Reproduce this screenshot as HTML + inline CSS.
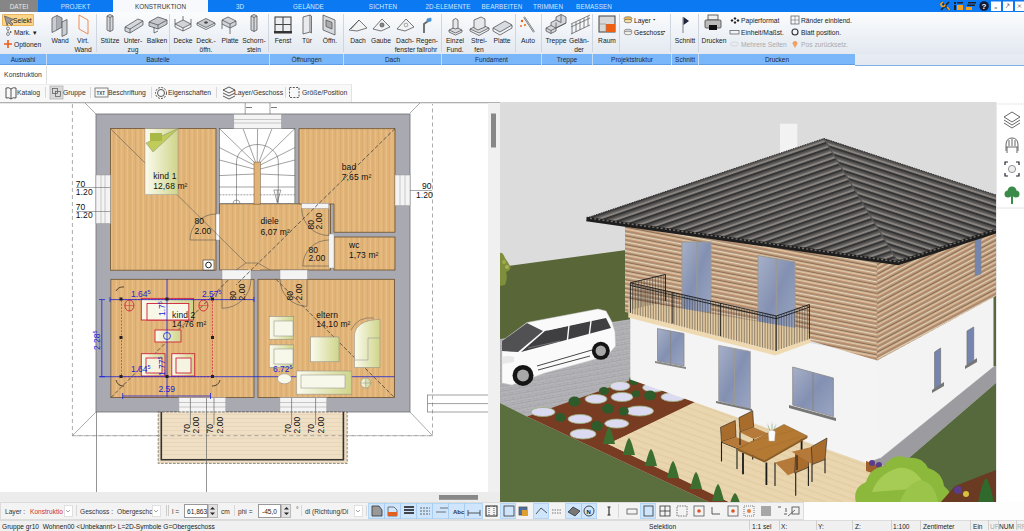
<!DOCTYPE html>
<html><head><meta charset="utf-8">
<style>
*{margin:0;padding:0;box-sizing:border-box}
html,body{width:1024px;height:531px;overflow:hidden;background:#fff;font-family:"Liberation Sans",sans-serif;color:#222}
.a{position:absolute}
#tabs{left:0;top:0;width:1024px;height:12px;background:#0a79f2}
.tab{position:absolute;top:0;height:12px;font-size:6.3px;line-height:13.5px;text-align:center;color:#d6e8ff;letter-spacing:0.1px}
#ribbon{left:0;top:12px;width:1024px;height:42px;background:linear-gradient(#fbfcfd,#e3e9f1)}
#strip{left:0;top:54px;width:855px;height:11px;background:#7ab7fa;border-bottom:1px solid #5f9fe6}
#strip2{left:855px;top:54px;width:169px;height:12px;background:linear-gradient(#e8edf4,#e3e9f1);border-bottom:1px solid #7eb0e8}
.gl{position:absolute;top:0;height:11px;line-height:11px;font-size:6.5px;color:#1c2a44;text-align:center}
.gs{position:absolute;top:0;width:1px;height:11px;background:#c6dcf3}
.lbl{position:absolute;font-size:6.7px;line-height:8.5px;color:#222;text-align:center;white-space:nowrap}
.rs{position:absolute;top:14px;width:1px;height:38px;background:#cfd6df}
.sm{position:absolute;font-size:6.7px;line-height:9.6px;color:#1a1a1a;white-space:nowrap}
#tb{left:0;top:84px;width:352px;height:18px;background:#f8f8f8;border-right:1px solid #e2e2e2;border-top:1px solid #eee}
.ti{position:absolute;top:0;height:16px;line-height:16px;font-size:6.8px;color:#333;white-space:nowrap}
.tsep{position:absolute;top:3px;width:1px;height:11px;background:#d8d8d8}
#bot{left:0;top:502px;width:1024px;height:18px;background:#f2f2f2}
#status{left:0;top:520px;width:1024px;height:11px;background:#f0f0f0;border-top:1px solid #dcdcdc}
.st{position:absolute;top:0;height:11px;line-height:13px;font-size:6.6px;color:#222;white-space:nowrap}
.ss{position:absolute;top:1px;width:1px;height:10px;background:#d0d0d0}
.bi{position:absolute;top:0;height:18px;line-height:20px;font-size:6.6px;color:#333;white-space:nowrap}
.bb{position:absolute;top:2px;width:15px;height:14px;background:#cfe5fb;border:1px solid #a9cff5}
</style></head><body>
<!-- TAB BAR -->
<div id="tabs" class="a">
 <div class="tab" style="left:0;width:38px;background:#868686;color:#e8e8e8">DATEI</div>
 <div class="tab" style="left:38px;width:75px;background:#0a79f2">PROJEKT</div>
 <div class="tab" style="left:113px;width:95px;background:#f7f9fc;color:#333">KONSTRUKTION</div>
 <div class="tab" style="left:222px;width:36px">3D</div>
 <div class="tab" style="left:280px;width:57px">GELÄNDE</div>
 <div class="tab" style="left:358px;width:50px">SICHTEN</div>
 <div class="tab" style="left:420px;width:56px">2D-ELEMENTE</div>
 <div class="tab" style="left:478px;width:48px">BEARBEITEN</div>
 <div class="tab" style="left:530px;width:36px">TRIMMEN</div>
 <div class="tab" style="left:573px;width:42px">BEMASSEN</div>
</div>
<div id="ribbon" class="a"></div>
<!-- RIBBON CONTENT -->
<div class="a" style="left:2px;top:14px;width:32px;height:12px;background:#fbd58a;border:1px solid #eab45a;border-radius:1px"></div>
<svg class="a" style="left:0;top:12px" width="1024" height="42" viewBox="0 12 1024 42">
 <g fill="none" stroke="#555" stroke-width="0.8">
  <!-- selekt arrow -->
  <path d="M4.5 16 L13.5 19.5 L10 21 L13 24 L11.5 25.5 L8.5 22.5 L7 25.5 Z" fill="#9a9a9a" stroke="#555" stroke-width="0.7" stroke-linejoin="miter"/>
  <!-- mark icon -->
  <circle cx="8" cy="28.5" r="1.5" stroke="#444" stroke-width="0.6"/><circle cx="8" cy="34" r="1.5" stroke="#444" stroke-width="0.6"/><path d="M8 30 L8 32.5" stroke="#444" stroke-width="0.6"/>
  <path d="M10 31 l2 1 l-2 1z" fill="#333" stroke="none"/>
  <!-- + optionen -->
  <path d="M4 44 H12 M8 40 V48" stroke="#f05a14" stroke-width="1.6"/>
  <!-- wand -->
  <path d="M52 18 L57 15.5 L57 30 L52 32.5 Z" fill="#c9ccd2" stroke="#555"/>
  <path d="M57 15.5 L62 18 L62 27 L57 30" fill="#a9adb5" stroke="#555"/>
  <path d="M62 22 L67 19.5 L67 34 L62 36.5 Z" fill="#c9ccd2" stroke="#555"/>
  <!-- virt wand -->
  <path d="M79 15 L88 20 L88 34 L79 29 Z" stroke="#f08040" stroke-width="0.9"/>
  <!-- stutze -->
  <path d="M107 16 L110 14.5 L113 16 L113 30 L110 31.5 L107 30 Z" fill="#d5d8dd"/><path d="M107 16 L110 17.5 L113 16 M110 17.5 V31.5"/>
  <!-- unterzug -->
  <path d="M125 27 L138 19 L143 21 L143 25 L130 33 L125 31 Z" fill="#d5d8dd"/><path d="M125 27 L130 29 L143 21 M130 29 V33"/>
  <!-- balken -->
  <path d="M149 22 L158 17 L167 20 L167 24 L158 29 L149 26 Z" fill="#c5c9cf"/><path d="M149 22 L158 25 L167 20 M158 25 V29 M154 27 V33 L158 31"/>
  <!-- decke -->
  <path d="M175 24 L183 20 L191 24 L183 28 Z" fill="#d0d3d8"/><path d="M175 24 V27 L183 31 L191 27 V24 M183 28 V31 M183 16 V20 M175 19 V24 M191 19 V24"/>
  <!-- deck offn -->
  <path d="M197 23 L206 18.5 L215 23 L206 27.5 Z" fill="#c8ccd2"/><path d="M197 23 V25 L206 29.5 L215 25 V23"/><path d="M204 22.5 L206 21.5 L208 22.5 L206 23.5 Z" fill="#444"/>
  <!-- platte -->
  <path d="M222 20 L228 17 L236 21 L236 25 L230 28 L222 24 Z" fill="#d0d3d8"/><path d="M222 20 L230 24 L236 21 M230 24 V34 M222 24 V29"/>
  <!-- schornstein -->
  <path d="M251 16 L254 14.5 L257 16 L257 30 L254 31.5 L251 30 Z" fill="#d5d8dd"/><path d="M251 16 L254 17.5 L257 16 M254 17.5 V31.5"/>
  <!-- fenst -->
  <rect x="275" y="17" width="16" height="15" fill="#eceef2" stroke="#444" stroke-width="1.1"/><path d="M283 17 V32 M275 24.5 H291" stroke="#444" stroke-width="1.1"/><rect x="274" y="31" width="18" height="2.5" fill="#333" stroke="none"/>
  <!-- tur -->
  <path d="M303 17 L310 15 L310 32 L303 34 Z" fill="#e8eaee" stroke="#555"/><path d="M310 15 L311.5 16 L311.5 33 L310 32"/>
  <!-- offn -->
  <path d="M323 15 L335 20 L335 35 L323 30 Z" fill="#d5d8dd" stroke="#555"/><path d="M326 20 L332 22.5 L332 29 L326 26.5 Z" fill="#aaa"/>
  <!-- dach -->
  <path d="M349 30 L359 20 L367 28 L357 31 Z M359 20 L351 29" fill="#f2f3f5" stroke="#555"/>
  <!-- gaube -->
  <path d="M373 29 L382 19 L390 27 L381 31 Z" fill="#f2f3f5"/><circle cx="382" cy="25" r="2" fill="#888"/>
  <!-- dachfenster -->
  <path d="M397 29 L406 19 L414 27 L405 31 Z" fill="#f2f3f5"/><path d="M404 24 L407 23 L408 26 L405 27 Z" stroke="#999"/>
  <!-- regenfallrohr -->
  <path d="M424 33 V24 L428 21" stroke="#666" stroke-width="1.8"/><path d="M427 19 L431 18 L431 21 L427 22 Z" fill="#4a90d0" stroke="#4a90d0"/>
  <!-- einzel fund -->
  <path d="M449 30 L455.5 27 L462 30 L455.5 33 Z" fill="#d8dbe0"/><path d="M449 30 V32 L455.5 35 L462 32 V30"/><path d="M453 20 L455.5 18.5 L458 20 V28 L455.5 29 L453 28 Z" fill="#e5e7ea"/>
  <!-- streifen -->
  <path d="M470 29 L480 24 L489 28 L479 33 Z" fill="#d8dbe0"/><path d="M470 29 V31 L479 35.5 L489 30 V28"/><path d="M474 20 L481 17 L485 19 V27 L478 30 L474 28 Z" fill="#e5e7ea"/>
  <!-- platte fund -->
  <path d="M493 28 L505 21 L512 25 L500 32 Z" fill="#d8dbe0"/><path d="M493 28 V31 L500 35 L512 28 V25"/>
  <!-- auto -->
  <path d="M524 17 L534 32" stroke="#555" stroke-width="1.8"/><path d="M524 17 L534 32" stroke="#fff" stroke-width="0.7"/>
  <circle cx="522" cy="21" r="1.2" fill="#f05a14" stroke="none"/><circle cx="525" cy="25" r="1.2" fill="#f08a34" stroke="none"/><circle cx="521" cy="26" r="0.9" fill="#f05a14" stroke="none"/>
  <!-- treppe -->
  <path d="M546 28 L551 25.5 L551 22.5 L556 20 L556 17 L561 14.5 L566 17 L566 23 L556 28 L556 31 L551 33.5 L546 31 Z" fill="#d5d8dd" stroke-linejoin="miter"/><path d="M546 28 L551 30.5 L566 23 M551 25.5 L556 28 M556 20 L561 22.5 M551 30.5 V33.5 M556 22.5 V28 M561 14.5 V22.5" stroke-linejoin="miter"/>
  <!-- gelander -->
  <path d="M571 34 L590 25 M571 27 L590 18 M571 24 L590 15 M572 24 V34 M576 22 V32 M580 20 V30 M584 18 V28 M588 16 V26" stroke="#666"/>
  <!-- raum -->
  <rect x="599" y="16" width="16" height="16" fill="#d8d8d8" stroke="#444" stroke-width="1"/><rect x="606" y="24" width="9" height="8" fill="#ee6010" stroke="none"/><path d="M599 24 H606 V32" stroke="#888" stroke-width="0.6"/>
  <!-- layer -->
  <ellipse cx="628" cy="18.5" rx="4" ry="1.8" fill="#f2c050" stroke="#555" stroke-width="0.6"/><ellipse cx="628" cy="21" rx="4" ry="1.8" fill="#f8e0a0" stroke="#555" stroke-width="0.6"/>
  <ellipse cx="628" cy="31" rx="4" ry="1.8" fill="#ddd" stroke="#666" stroke-width="0.6"/><ellipse cx="628" cy="33" rx="4" ry="1.8" fill="#eee" stroke="#666" stroke-width="0.6"/>
  <path d="M653 19 l2.5 0 l-1.25 1.5z M663 31 l2.5 0 l-1.25 1.5z" fill="#333" stroke="none"/>
  <!-- schnitt -->
  <path d="M683 17 V33" stroke="#777" stroke-width="0.9"/><path d="M683.5 17 L689 21 L683.5 25 Z" fill="#1e2440" stroke="none"/>
  <!-- drucken -->
  <rect x="708" y="15" width="10" height="5" fill="#eee" stroke="#444"/><rect x="705" y="20" width="16" height="8" rx="1" fill="#bbb" stroke="#444"/><rect x="709" y="25" width="8" height="5" fill="#111" stroke="none"/>
  <!-- papierformat -->
  <path d="M735 17 l1.5 1.5 l-1.5 1.5 l-1.5 -1.5z M735 21 l1.5 1.5 l-1.5 1.5 l-1.5 -1.5z M732 19 l1.5 1.5 l-1.5 1.5 l-1.5 -1.5z M738 19 l1.5 1.5 l-1.5 1.5 l-1.5 -1.5z" fill="#222" stroke="none"/>
  <rect x="730" y="30.5" width="9" height="3.5" stroke="#555" stroke-width="0.7"/>
  <ellipse cx="734.5" cy="44" rx="4" ry="2" stroke="#ccc" stroke-width="0.7"/>
  <rect x="791" y="16" width="8" height="8" stroke="#555" stroke-width="0.7"/><path d="M795 16 V24 M791 20 H799" stroke="#555" stroke-width="0.5"/>
  <circle cx="795" cy="32" r="3" stroke="#333" stroke-width="1.1"/>
  <path d="M795 48 L792.5 43.5 A2.5 2.5 0 1 1 797.5 43.5 Z" fill="#f0a060" stroke="none"/>
  <path d="M690 14 V52" stroke="none"/>
 </g>
</svg>
<div class="sm" style="left:13px;top:16px;font-weight:normal">Selekt</div>
<div class="sm" style="left:14px;top:28px">Mark. ▾</div>
<div class="sm" style="left:14px;top:40px">Optionen</div>
<div class="rs" style="left:96px"></div><div class="rs" style="left:169px"></div><div class="rs" style="left:268px"></div>
<div class="rs" style="left:343px"></div><div class="rs" style="left:441px"></div><div class="rs" style="left:515px"></div>
<div class="rs" style="left:541px"></div><div class="rs" style="left:592px"></div><div class="rs" style="left:619px"></div>
<div class="rs" style="left:670px"></div><div class="rs" style="left:698px"></div>
<div class="lbl" style="left:40px;width:40px;top:37px">Wand</div>
<div class="lbl" style="left:63px;width:40px;top:37px">Virt.<br>Wand</div>
<div class="lbl" style="left:90px;width:40px;top:37px">Stütze</div>
<div class="lbl" style="left:113px;width:40px;top:37px">Unter-<br>zug</div>
<div class="lbl" style="left:137px;width:40px;top:37px">Balken</div>
<div class="lbl" style="left:163px;width:40px;top:37px">Decke</div>
<div class="lbl" style="left:186px;width:40px;top:37px">Deck.-<br>öffn.</div>
<div class="lbl" style="left:210px;width:40px;top:37px">Platte</div>
<div class="lbl" style="left:234px;width:40px;top:37px">Schorn-<br>stein</div>
<div class="lbl" style="left:263px;width:40px;top:37px">Fenst</div>
<div class="lbl" style="left:287px;width:40px;top:37px">Tür</div>
<div class="lbl" style="left:310px;width:40px;top:37px">Öffn.</div>
<div class="lbl" style="left:338px;width:40px;top:37px">Dach</div>
<div class="lbl" style="left:361px;width:40px;top:37px">Gaube</div>
<div class="lbl" style="left:385px;width:40px;top:37px">Dach-<br>fenster</div>
<div class="lbl" style="left:407px;width:40px;top:37px">Regen-<br>fallrohr</div>
<div class="lbl" style="left:435px;width:40px;top:37px">Einzel<br>Fund.</div>
<div class="lbl" style="left:459px;width:40px;top:37px">Strei-<br>fen</div>
<div class="lbl" style="left:482px;width:40px;top:37px">Platte</div>
<div class="lbl" style="left:508px;width:40px;top:37px">Auto</div>
<div class="lbl" style="left:536px;width:40px;top:37px">Treppe</div>
<div class="lbl" style="left:559px;width:40px;top:37px">Gelän-<br>der</div>
<div class="lbl" style="left:587px;width:40px;top:37px">Raum</div>
<div class="sm" style="left:634px;top:16px">Layer</div>
<div class="sm" style="left:634px;top:28px">Geschoss</div>
<div class="lbl" style="left:665px;width:40px;top:37px">Schnitt</div>
<div class="lbl" style="left:694px;width:40px;top:37px">Drucken</div>
<div class="sm" style="left:741px;top:16px">Papierformat</div>
<div class="sm" style="left:741px;top:28px">Einheit/Maßst.</div>
<div class="sm" style="left:741px;top:40px;color:#aaa">Mehrere Seiten</div>
<div class="sm" style="left:801px;top:16px">Ränder einblend.</div>
<div class="sm" style="left:801px;top:28px">Blatt position.</div>
<div class="sm" style="left:801px;top:40px;color:#aaa">Pos zurücksetz.</div>
<!-- tab bar icons -->
<svg class="a" style="left:930px;top:0" width="94" height="12">
 <path d="M11 2 L19 10 M19 2 L11 10" stroke="#222" stroke-width="1.6"/><path d="M13 2.5 a2 2 0 1 0 2 2 M17 7 L19.5 10" stroke="#f5a020" stroke-width="1.6" fill="none"/>
 <rect x="24" y="2" width="2" height="2" fill="#222"/><rect x="24" y="5" width="2" height="5" fill="#222"/><rect x="27" y="5" width="6" height="5" fill="#f5a020"/><rect x="27" y="2" width="6" height="1.5" fill="#222"/>
 <rect x="38" y="2" width="8" height="1.5" fill="#222"/><rect x="37" y="4.5" width="8" height="1.5" fill="#222"/><rect x="36" y="7" width="6" height="3" fill="#f5a020"/>
 <circle cx="54" cy="6" r="4.8" fill="#111a33"/><text x="54" y="8.8" font-size="8" font-weight="bold" text-anchor="middle" fill="#fff" font-family="Liberation Sans">?</text>
 <rect x="61" y="1.5" width="10" height="9.5" fill="#fff"/><rect x="73" y="1.5" width="10" height="9.5" fill="#fff"/><rect x="85" y="1.5" width="9" height="9.5" fill="#fff"/>
 <path d="M64.5 8 H67" stroke="#333" stroke-width="0.8"/><path d="M76 8 L79 4 M77 4 H79 V6" stroke="#555" stroke-width="0.6" fill="none"/><path d="M88 4.5 L91 7.5 M91 4.5 L88 7.5" stroke="#555" stroke-width="0.7"/>
</svg>

<div id="strip" class="a">
 <div class="gl" style="left:0;width:46px">Auswahl</div><div class="gs" style="left:46px"></div>
 <div class="gl" style="left:47px;width:222px">Bauteile</div><div class="gs" style="left:269px"></div>
 <div class="gl" style="left:270px;width:73px">Öffnungen</div><div class="gs" style="left:343px"></div>
 <div class="gl" style="left:344px;width:97px">Dach</div><div class="gs" style="left:441px"></div>
 <div class="gl" style="left:442px;width:99px">Fundament</div><div class="gs" style="left:541px"></div>
 <div class="gl" style="left:542px;width:50px">Treppe</div><div class="gs" style="left:592px"></div>
 <div class="gl" style="left:593px;width:78px">Projektstruktur</div><div class="gs" style="left:671px"></div>
 <div class="gl" style="left:672px;width:26px">Schnitt</div><div class="gs" style="left:698px"></div>
 <div class="gl" style="left:699px;width:156px">Drucken</div>
</div>
<div id="strip2" class="a"></div>
<!-- KONSTRUKTION TAB ROW -->
<div class="a" style="left:0;top:66px;width:47px;height:18px;border-right:1px solid #e0e0e0;background:#fff;font-size:6.8px;line-height:18px;text-align:center;color:#333">Konstruktion</div>
<div id="tb" class="a"></div>
<!-- TOOLBAR -->
<svg class="a" style="left:0;top:84px" width="360" height="18">
 <g fill="none" stroke="#444" stroke-width="0.9">
  <path d="M6 4 Q9 3 11 5 Q13 3 16 4 V14 Q13 13 11 15 Q9 13 6 14 Z M11 5 V15"/>
  <rect x="50" y="2" width="13" height="13" fill="#d8d8d8" stroke="#bbb"/><rect x="52.5" y="4.5" width="5" height="5" stroke="#555" stroke-width="0.7"/><rect x="55.5" y="7.5" width="5" height="5" stroke="#555" stroke-width="0.7"/>
  <rect x="95" y="4" width="13" height="9" stroke="#555" stroke-width="0.7"/>
  <circle cx="161" cy="9" r="3.5"/><circle cx="161" cy="9" r="5.5" stroke-dasharray="2 1.2"/>
  <path d="M223 6 L229 3 L235 6 L229 9 Z M223 9 L229 12 L235 9 M223 12 L229 15 L235 12"/>
  <rect x="289.5" y="3.5" width="9.5" height="10" stroke-dasharray="2 1.3"/>
 </g>
 <text x="96.5" y="11" font-size="4.5" font-weight="bold" fill="#444" font-family="Liberation Sans">TXT</text>
</svg>
<div class="ti" style="left:17px;top:85px">Katalog</div><div class="tsep" style="left:45px;top:87px"></div>
<div class="ti" style="left:63px;top:85px">Gruppe</div><div class="tsep" style="left:90px;top:87px"></div>
<div class="ti" style="left:108px;top:85px">Beschriftung</div><div class="tsep" style="left:151px;top:87px"></div>
<div class="ti" style="left:168px;top:85px">Eigenschaften</div><div class="tsep" style="left:216px;top:87px"></div>
<div class="ti" style="left:234px;top:85px">Layer/Geschoss</div><div class="tsep" style="left:285px;top:87px"></div>
<div class="ti" style="left:302px;top:85px">Größe/Position</div>


<!-- PLAN -->
<svg class="a" style="left:0;top:102px" width="500" height="400" viewBox="0 102 500 400" font-family="Liberation Sans">
 <defs>
  <pattern id="wood" patternUnits="userSpaceOnUse" width="5.4" height="10">
   <rect width="5.4" height="10" fill="#e3b67a"/><rect x="0" width="1" height="10" fill="#d9aa6e"/><rect x="2.7" width="1.1" height="10" fill="#e9c088"/><rect x="4" width="0.7" height="10" fill="#dcae72"/>
  </pattern>
  <pattern id="beige" patternUnits="userSpaceOnUse" width="10" height="4">
   <rect width="10" height="4" fill="#efdfc4"/><rect y="2" width="10" height="1" fill="#e9d6b8"/>
  </pattern>
  <linearGradient id="fur" x1="0" x2="1" y1="0" y2="0"><stop offset="0" stop-color="#fbfbee"/><stop offset="1" stop-color="#cfd58a"/></linearGradient>
 </defs>
 <rect x="0" y="102" width="500" height="400" fill="#fff"/>
 <rect x="0" y="102" width="500" height="1.3" fill="#b0b0b0"/>
 <!-- dashed outline -->
 <g stroke="#888" stroke-width="0.7" fill="none">
  <path d="M72.4 104 V435.7 H432.5 V104" stroke-dasharray="4 3"/>
  <path d="M72.4 435.7 L96 412 M432.5 435.7 L410 412 M85 103 L96 114 M420 103 L410 113"/>
  <rect x="427.5" y="395" width="62" height="17" stroke="#777"/><path d="M427.5 403.6 H490" stroke="#777"/>
 </g>
 <!-- walls -->
 <rect x="96" y="114" width="314" height="298" fill="#a9a9b1" stroke="#6e6e76" stroke-width="0.8"/>
 <!-- rooms -->
 <g stroke="#6a5030" stroke-width="0.8">
  <rect x="110.4" y="128.6" width="105.6" height="141.6" fill="url(#wood)"/>
  <rect x="219.6" y="203.8" width="110.9" height="66.2" fill="url(#wood)"/>
  <path d="M299 128.6 H395 V232.3 H334 V204 H299 Z" fill="url(#wood)"/>
  <rect x="334" y="237" width="61" height="33" fill="url(#wood)"/>
  <rect x="110.9" y="279.3" width="143.1" height="118.3" fill="url(#wood)"/>
  <rect x="258" y="279.3" width="136.5" height="118.3" fill="url(#wood)"/>
 </g>
 <!-- stairs -->
 <rect x="219.4" y="128.6" width="75.5" height="75" fill="#fff" stroke="#555" stroke-width="0.6"/>
 <g stroke="#444" stroke-width="0.5" fill="none">
  <path d="M236.5 203.5 V162 A20.9 17.5 0 0 1 278.3 162 V203.5"/>
  <path d="M255 163 L219.4 128.6 M255.5 162 L243 128.6 M257.2 162 L257.6 128.6 M259 162 L272 128.6 M259.5 163 L294.9 128.6"/>
  <path d="M254 165 L219.4 147.6 M254 169 L219.4 160 M254 174 L219.4 175.6 M260.3 165 L294.9 147.6 M260.3 169 L294.9 160 M260.3 174 L294.9 175.6"/>
  <path d="M219.4 187 H254 M260.3 187 H294.9"/>
  <path d="M219.4 194.8 H254 M260.3 194.8 H294.9" stroke-dasharray="2 1"/>
  <path d="M273.8 190 H280.8 L277.3 202.5 Z M277.3 190 V202.5"/>
  <path d="M233 203.5 A3.5 3.5 0 0 1 240 203.5"/>
  <path d="M245.2 103 V128.6 M270 103 V128.6"/><path d="M246 107.5 H252 M271 107.5 H277" stroke="#222" stroke-width="0.6"/>
 </g>
 <rect x="254" y="162.1" width="6.3" height="42" fill="#e2b377" stroke="#6a5030" stroke-width="0.5"/>
 <!-- windows -->
 <g fill="#f4f4f4" stroke="#999" stroke-width="0.5">
  <rect x="233.8" y="114.3" width="47.6" height="14.3"/><path d="M233.8 119.5 H281.4 M233.8 123 H281.4" fill="none"/>
  <rect x="96" y="175" width="14.4" height="48.5"/><path d="M101 175 V223.5 M105 175 V223.5" fill="none"/>
  <rect x="395" y="175" width="15" height="30.6"/><path d="M400 175 V205.6 M405 175 V205.6" fill="none"/>
  <rect x="178.9" y="397.6" width="46.9" height="14.4"/><path d="M178.9 402.5 H225.8 M178.9 407 H225.8" fill="none"/>
  <rect x="279.9" y="397.6" width="46.9" height="14.4"/><path d="M279.9 402.5 H326.8 M279.9 407 H326.8" fill="none"/>
  <rect x="222" y="270" width="29" height="9.3"/><rect x="280" y="270" width="27.5" height="9.3"/>
  <rect x="216" y="214" width="3.6" height="26" fill="#fff"/>
  <rect x="301.7" y="203.4" width="27" height="5"/>
  <rect x="328.8" y="234" width="5.2" height="34"/>
  <rect x="248" y="266" width="12" height="4" stroke="none" fill="#e2b377"/>
 </g>
 <!-- window dim lines -->
 <g stroke="#555" stroke-width="0.5" fill="none">
  <path d="M76 187.5 H110 M76 211.5 H110 M410 190.5 H432"/>
  
 </g>
 <!-- door arcs -->
 <g stroke="#444" stroke-width="0.5" fill="none">
  <path d="M216 214 A26 26 0 0 0 190 240 H216"/>
  <path d="M301.7 208.5 A27 27 0 0 0 328.8 235.5 V208.5"/>
  <path d="M328.8 240 A26 26 0 0 0 302.8 266 H328.8"/>
  <path d="M251 279.3 A29 29 0 0 1 222 308.3 V279.3"/>
  <path d="M280 279.3 A27 27 0 0 0 307 306.3 V279.3"/>
 </g>
 <!-- room diagonals -->
 <g stroke="#555" stroke-width="0.55" fill="none">
  <path d="M110.4 128.6 L246 263 L236 270 M258 263 L270 270 M246 263 H258"/>
  <path d="M395 128.6 L236 285 M110.9 397.6 L229 279.3" stroke-dasharray="4 2" stroke="#3a3a3a" stroke-width="0.75"/>
  <path d="M276 279.3 L394.5 397.6" stroke-dasharray="4 2" stroke="#3a3a3a" stroke-width="0.75"/>
  
 </g>
 <!-- bed kind1 -->
 <rect x="145" y="128.6" width="33" height="66" fill="url(#fur)" stroke="#999" stroke-width="0.5"/>
 <path d="M178 128.6 L146 143 L153 152 Z" fill="#bfcc5a" stroke="#777" stroke-width="0.4"/>
 <rect x="150" y="133" width="12" height="8" fill="#aab845"/>
 <!-- stove icon -->
 <rect x="203" y="260" width="11" height="10" fill="#fff" stroke="#333" stroke-width="0.6"/><circle cx="208.5" cy="265" r="2.8" fill="none" stroke="#222" stroke-width="1"/>
 <!-- kind2 furniture -->
 <g stroke="#d0203a" stroke-width="0.9">
  <rect x="141.3" y="298.4" width="52.2" height="21.6" fill="url(#fur)"/>
  <rect x="147" y="303.5" width="41.8" height="16.5" fill="#f8f8e8"/>
  <rect x="155" y="330" width="26" height="12" fill="url(#fur)"/>
  <rect x="141.3" y="353.7" width="23.7" height="22.3" fill="url(#fur)"/><rect x="146" y="358" width="16" height="15" fill="#f4f4e0"/>
  <rect x="171.8" y="353.7" width="22.9" height="22.3" fill="url(#fur)"/><rect x="176" y="358" width="15" height="15" fill="#f4f4e0"/>
  <ellipse cx="129.4" cy="305.5" rx="4.5" ry="5.5" fill="none"/><path d="M125 305.5 H134 M129.4 300 V311" stroke-width="0.5"/>
  <ellipse cx="203.4" cy="305.5" rx="4.5" ry="5.5" fill="none"/><path d="M199 305.5 H208" stroke-width="0.5"/>
  <rect x="121.5" y="299.6" width="91" height="77.1" fill="none" stroke-dasharray="2 1.3" stroke-width="0.7"/>
 </g>
 <g stroke="#1c22d8" stroke-width="0.8" fill="none">
  <path d="M116 291 A8 8 0 0 1 124 287 M116 380 A8 8 0 0 0 124 386 M212 386 A8 8 0 0 0 220 380" stroke="#111" stroke-width="0.7"/>
  <path d="M110 299.6 H254 M100 376.7 H394.5 M122.7 396 H210.5 M101.8 299.6 V376.7 M167 279 V397"/>
  <path d="M110 297 V302 M254 297 V302 M99 299.6 H105 M99 376.7 H105 M122.7 393 V399 M210.5 393 V399"/>
  <circle cx="167" cy="336" r="3.5"/>
 </g>
 <g fill="#222">
  <rect x="119.5" y="297.5" width="3" height="3"/><rect x="165.5" y="297.5" width="3" height="3"/><rect x="211" y="297.5" width="3" height="3"/>
  <rect x="119.5" y="375" width="3" height="3"/><rect x="165.5" y="375" width="3" height="3"/><rect x="211" y="375" width="3" height="3"/>
  <rect x="119.5" y="336" width="3" height="3"/><rect x="211" y="336" width="3" height="3"/>
 </g>
 <!-- eltern furniture -->
 <g stroke="#888" stroke-width="0.5" fill="url(#fur)">
  <rect x="269.2" y="316.6" width="24.6" height="22.6"/><rect x="274" y="321" width="19" height="15" fill="#f8f8ea"/>
  <rect x="269.2" y="344.9" width="24.6" height="22.6"/><rect x="274" y="349" width="19" height="15" fill="#f8f8ea"/>
  <rect x="310.7" y="337" width="28.3" height="24.8"/>
  <path d="M354.5 367.5 V335 Q356 320 380 319.4 V367.5 Z"/><path d="M354.5 360 H368 V338 H380" fill="none"/>
  <path d="M296.6 371 H351.7 V394.3 H296.6 Z"/><rect x="301" y="375" width="44" height="13" fill="#f8f8ea"/>
  <ellipse cx="284.5" cy="378.8" rx="7" ry="5" fill="#f8f8ea"/>
  <circle cx="365.8" cy="383" r="5"/><path d="M360.8 383 H370.8 M365.8 378 V388" fill="none"/>
 </g>
 <path d="M351 330 Q358 316 374 318" stroke="#555" stroke-width="0.5" fill="none"/>
 <!-- balcony -->
 <rect x="158.2" y="412" width="189" height="51.4" fill="url(#beige)" stroke="#555" stroke-width="0.7" stroke-dasharray="2.5 1.5"/>
 <path d="M161.3 412 V459.8 H343.4 V412" stroke="#333" stroke-width="1.6" fill="none"/>
 <path d="M72.4 435.7 H432.5" stroke="#888" stroke-width="0.7" stroke-dasharray="4 3"/>
 <path d="M96.5 412 V492 M206.5 398 V492 M190.4 398 V425 M214 398 V425 M291.6 398 V425 M315.6 398 V425" stroke="#666" stroke-width="0.7" fill="none"/>
 <!-- texts -->
 <g font-size="8.5" fill="#111" letter-spacing="0.1">
  <text x="153.2" y="179">kind 1</text><text x="153.2" y="188.7">12,68 m²</text>
  <text x="260.4" y="224.4">diele</text><text x="260.4" y="234.8">6,07 m²</text>
  <text x="341.8" y="170">bad</text><text x="341.8" y="179.5">7,65 m²</text>
  <text x="349" y="248.3">wc</text><text x="349" y="258">1,73 m²</text>
  <text x="172.1" y="317.5">kind 2</text><text x="172.1" y="326.9">14,76 m²</text>
  <text x="316.2" y="317.5">eltern</text><text x="316.2" y="326.9">14,10 m²</text>
  <text x="194.5" y="224.4">80</text><text x="194.5" y="233.8">2.00</text>
  <text x="308.4" y="253.4">80</text><text x="308.4" y="260.7">2.00</text>
  <text x="75.8" y="186.8">70</text><text x="75.8" y="194.8">1.20</text>
  <text x="75.8" y="210.3">70</text><text x="75.8" y="218.3">1.20</text>
  <text x="422" y="189">90</text><text x="416" y="197.5">1.20</text>
 </g>
 <g font-size="8.5" fill="#111" letter-spacing="0.1">
  <text transform="translate(313.5 229.6) rotate(-90)">80</text><text transform="translate(322 229.6) rotate(-90)">2.00</text>
  <text transform="translate(236.2 300.5) rotate(-90)">80</text><text transform="translate(245 300.5) rotate(-90)">2.00</text>
  <text transform="translate(292.6 300.5) rotate(-90)">80</text><text transform="translate(301.5 300.5) rotate(-90)">2.00</text>
  <text transform="translate(189.5 433.5) rotate(-90)">70</text><text transform="translate(199 433.5) rotate(-90)">2.00</text>
  <text transform="translate(213 433.5) rotate(-90)">70</text><text transform="translate(222.8 433.5) rotate(-90)">2.00</text>
  <text transform="translate(290.5 433.5) rotate(-90)">70</text><text transform="translate(300 433.5) rotate(-90)">2.00</text>
  <text transform="translate(314 433.5) rotate(-90)">70</text><text transform="translate(323.5 433.5) rotate(-90)">2.00</text>
 </g>
 <g font-size="8.5" fill="#1c22d8">
  <text transform="translate(165 316) rotate(-90)">1.7<tspan font-size="5.5" dy="-3">5</tspan></text><text transform="translate(165 376) rotate(-90)">1.77<tspan font-size="5.5" dy="-3">5</tspan></text>
  <text x="131" y="297">1.64<tspan font-size="5.5" dy="-3">5</tspan></text><text x="202" y="296.6">2.57<tspan font-size="5.5" dy="-3">5</tspan></text>
  <text x="131" y="372">1.64<tspan font-size="5.5" dy="-3">5</tspan></text><text x="158.5" y="392">2.59</text><text x="273" y="372">6.72<tspan font-size="5.5" dy="-3">5</tspan></text>
  <text transform="translate(99.5 350) rotate(-90)">2.28<tspan font-size="5.5" dy="-3">5</tspan></text>
 </g>
 <!-- scrollbars -->
 <rect x="488" y="103" width="12" height="389" fill="#f0f0f0"/>
 <rect x="491" y="113.5" width="5" height="34" fill="#888"/>
 <rect x="0" y="492" width="500" height="10" fill="#ececec"/>
 <rect x="439" y="495" width="39" height="4.8" fill="#888"/>
</svg>

<!-- 3D VIEW -->
<svg class="a" style="left:500px;top:102px" width="496" height="401" viewBox="500 102 496 401">
 <defs>
  <pattern id="roofL" patternUnits="userSpaceOnUse" width="30" height="6.2" patternTransform="rotate(-19)">
   <rect width="30" height="6.2" fill="#8e8985"/><rect y="0" width="30" height="2.4" fill="#353434"/><rect y="2.4" width="30" height="1" fill="#4c4a49"/><rect y="3.4" width="30" height="1" fill="#6a6664"/><rect y="5.6" width="30" height="0.6" fill="#77726e"/>
  </pattern>
  <pattern id="roofR" patternUnits="userSpaceOnUse" width="30" height="6.2" patternTransform="rotate(18)">
   <rect width="30" height="6.2" fill="#8e8985"/><rect y="0" width="30" height="2.4" fill="#353434"/><rect y="2.4" width="30" height="1" fill="#4c4a49"/><rect y="3.4" width="30" height="1" fill="#6a6664"/><rect y="5.6" width="30" height="0.6" fill="#77726e"/>
  </pattern>
  <pattern id="woodL" patternUnits="userSpaceOnUse" width="40" height="8.6" patternTransform="rotate(11)">
   <rect width="40" height="8.6" fill="#c9a988"/><rect y="0" width="40" height="1.3" fill="#8f7058"/><rect y="1.3" width="40" height="1.6" fill="#dcc6a6"/><rect y="2.9" width="40" height="1.3" fill="#c89572"/><rect y="4.3" width="40" height="1.2" fill="#927460"/><rect y="5.5" width="40" height="1.7" fill="#e6d6b8"/><rect y="7.2" width="40" height="1.4" fill="#b89272"/>
  </pattern>
  <pattern id="woodR" patternUnits="userSpaceOnUse" width="40" height="8.6" patternTransform="rotate(-28)">
   <rect width="40" height="8.6" fill="#c4a484"/><rect y="0" width="40" height="1.3" fill="#8a6c54"/><rect y="1.3" width="40" height="1.6" fill="#d8c2a2"/><rect y="2.9" width="40" height="1.3" fill="#c4916e"/><rect y="4.3" width="40" height="1.2" fill="#8e705c"/><rect y="5.5" width="40" height="1.7" fill="#e2d2b4"/><rect y="7.2" width="40" height="1.4" fill="#b48e6e"/>
  </pattern>
  <pattern id="pave" patternUnits="userSpaceOnUse" width="8" height="5" patternTransform="rotate(-10)">
   <rect width="8" height="5" fill="#b3b3b8"/><path d="M0 0 H8 M0 2.5 H8 M4 0 V2.5 M0 2.5 V5" stroke="#9c9ca1" stroke-width="0.6"/>
  </pattern>
  <pattern id="patio" patternUnits="userSpaceOnUse" width="30" height="6" patternTransform="rotate(20)">
   <rect width="30" height="6" fill="#e9d5ae"/><rect y="3" width="30" height="1.2" fill="#e2cca2"/>
  </pattern>
  <linearGradient id="glass" x1="0" x2="1" y1="0" y2="1"><stop offset="0" stop-color="#a6b0c8"/><stop offset="0.5" stop-color="#8490b2"/><stop offset="1" stop-color="#9aa6c2"/></linearGradient>
 </defs>
 <rect x="500" y="102" width="496" height="401" fill="#dcdcdc"/>
 <!-- back lawn -->
 <path d="M500 267 L630 249.5 V345 L500 345 Z" fill="#586638"/>
 <path d="M500 253 Q503 252 505 258 Q508 262 510 266 Q512 270 506 272 Q508 278 505 285 L500 286 Z" fill="#7e8e3a"/><circle cx="504" cy="262" r="2" fill="#a0a850"/><circle cx="507" cy="267" r="2" fill="#a8b058"/>
 <!-- driveway -->
 <path d="M500 339 L632 319 V379.5 L527 416.5 L500 403 Z" fill="url(#pave)"/>
 <!-- lower-left lawn -->
 <path d="M500 403 L527 416.5 L711 503 H500 Z" fill="#5a6e3e"/>
 <!-- mulch bed -->
 <path d="M527 416.5 L632 379.5 L697.5 401.6 L608 444 L731 503 H711 Z" fill="#783c23"/>
 <!-- patio -->
 <path d="M697 401 L866 463 L880 458 L898 467 L870 503 H731 L608 444 Z" fill="url(#patio)"/>
 <!-- path right -->
 <path d="M866 463 L993.5 366 L996 366 V383 L898 467.4 Z" fill="#9c9ca0"/><path d="M880 458 L993.5 366" stroke="#c8c8c8" stroke-width="1.5"/>
 <path d="M898 467.4 L996 383 V503 H870 Z" fill="#55693c"/>
 <!-- flowers bed -->
 <g fill="#dcdaf0" stroke="#9ab078" stroke-width="0.8">
  <ellipse cx="620" cy="386" rx="10" ry="4.5"/><ellipse cx="653.6" cy="387.6" rx="11" ry="4.5"/>
  <ellipse cx="596" cy="399" rx="11" ry="4.5"/><ellipse cx="622" cy="397" rx="11" ry="4.5"/><ellipse cx="673" cy="397" rx="12" ry="4.5"/>
  <ellipse cx="543" cy="412" rx="12" ry="4.5"/><ellipse cx="580" cy="419" rx="12" ry="4.5"/><ellipse cx="639.5" cy="411" rx="14" ry="5"/>
  <ellipse cx="616.7" cy="423.6" rx="12" ry="4.5"/><ellipse cx="583" cy="434" rx="13" ry="5"/>
 </g>
 <g fill="#2f5a2a">
  <ellipse cx="574.5" cy="401.6" rx="6" ry="5"/><ellipse cx="634" cy="380.5" rx="5" ry="4.5"/><ellipse cx="650" cy="395.5" rx="6" ry="5"/><ellipse cx="608" cy="408.7" rx="6" ry="5"/>
  <ellipse cx="560.4" cy="417.5" rx="5" ry="4.5"/><ellipse cx="597" cy="426" rx="6" ry="5"/><ellipse cx="604" cy="391" rx="5" ry="4"/><ellipse cx="636" cy="393.7" rx="4" ry="3.5"/><ellipse cx="623.7" cy="411.3" rx="5" ry="4.5"/>
 </g>
 <!-- conifers -->
 <g fill="#3c6e30">
  <path d="M603 444 Q607 428 609 427 Q611 428 615 444 Z"/><path d="M623 455 Q627 439 629 438 Q631 439 635 455 Z"/><path d="M645 466 Q649 450 651 449 Q653 450 657 466 Z"/>
  <path d="M667 478 Q671 462 673 461 Q675 462 679 478 Z"/><path d="M690 489 Q694 473 696 472 Q698 473 702 489 Z"/><path d="M712 501 Q716 485 718 484 Q720 485 724 501 Z"/><path d="M730 503 Q733 494 735 493 Q737 494 740 503 Z"/>
 </g>
 <!-- white walls -->
 <path d="M630.3 308 L877 356 L994 290 V366 L993.5 366 L880 458 L866 463 L630.3 379.5 Z" fill="#f4f4f4"/>
 <path d="M877 361 L994 296 V366 L880 458 Z" fill="#f3f3f3"/><path d="M993.5 290 L996 288 V366 H993.5 Z" fill="#55693c"/>
 <!-- wood facade -->
 <path d="M625 223 L877 259 L996 226 V295.7 L877 360.5 L811 341 L625 312 Z" fill="url(#woodL)"/>
 <path d="M877 259 L996 226 V295.7 L877 360.5 Z" fill="url(#woodR)"/>
 <path d="M877 264 V360.5" stroke="#b89878" stroke-width="0.6"/>
 <!-- upper windows -->
 <rect x="682" y="242" width="29" height="70" fill="url(#glass)" stroke="#999" stroke-width="1"/><path d="M697 242 V312" stroke="#999" stroke-width="1.5"/>
 <path d="M758 255.6 L795 262 V333 L758 327 Z" fill="url(#glass)" stroke="#999" stroke-width="1"/><path d="M776.5 258.8 V330" stroke="#999" stroke-width="1.5"/>
 <path d="M975 240 L981 238 V274 L975 276 Z" fill="#7486b0" stroke="#888" stroke-width="0.6"/>
 <!-- balcony floor -->
 <path d="M628.3 301 L632 300 L808 330 L810.5 338.7 L775.3 351 L628.3 312.8 Z" fill="#e2c9a0"/>
 <path d="M628.3 312.8 L775.3 351 L810.5 338.7 V342.7 L775.3 355.5 L628.3 317.5 Z" fill="#efd9b0"/>
 <!-- railing -->
 <g stroke="#1a1a1a" stroke-width="0.9" fill="none">
  <path d="M630.4 282.8 L776.3 316 L809.4 304.5 M630.4 282.8 L665.5 274.5 M630.4 285.5 L776.3 318.7 L809.4 307.2"/>
  <path d="M630.4 282.8 V312.8 M665.5 274.5 V301 M672.8 292.3 V323.5 M720.4 303.2 V336 M776.3 316 V351 M809.4 304.5 V338.7"/>
 </g>
 <path d="M632.5 283.3 V313.9 M635.1 283.9 V314.6 M637.7 284.5 V315.2 M640.3 285.1 V315.9 M642.9 285.6 V316.6 M645.5 286.2 V317.3 M648.1 286.8 V317.9 M650.7 287.4 V318.6 M653.3 288.0 V319.3 M655.9 288.6 V320.0 M658.5 289.2 V320.6 M661.1 289.8 V321.3 M663.7 290.4 V322.0 M666.3 291.0 V322.7 M668.9 291.6 V323.4 M671.5 292.2 V324.0 M674.1 292.7 V324.7 M676.7 293.3 V325.4 M679.3 293.9 V326.1 M681.9 294.5 V326.7 M684.5 295.1 V327.4 M687.1 295.7 V328.1 M689.7 296.3 V328.8 M692.3 296.9 V329.4 M694.9 297.5 V330.1 M697.5 298.1 V330.8 M700.1 298.7 V331.5 M702.7 299.3 V332.1 M705.3 299.8 V332.8 M707.9 300.4 V333.5 M710.5 301.0 V334.2 M713.1 301.6 V334.8 M715.7 302.2 V335.5 M718.3 302.8 V336.2 M720.9 303.4 V336.9 M723.5 304.0 V337.5 M726.1 304.6 V338.2 M728.7 305.2 V338.9 M731.3 305.8 V339.6 M733.9 306.4 V340.2 M736.5 306.9 V340.9 M739.1 307.5 V341.6 M741.7 308.1 V342.3 M744.3 308.7 V342.9 M746.9 309.3 V343.6 M749.5 309.9 V344.3 M752.1 310.5 V345.0 M754.7 311.1 V345.6 M757.3 311.7 V346.3 M759.9 312.3 V347.0 M762.5 312.9 V347.7 M765.1 313.5 V348.3 M767.7 314.0 V349.0 M770.3 314.6 V349.7 M772.9 315.2 V350.4 M775.5 315.8 V351.1 M778.8 315.1 V349.8 M781.4 314.2 V348.9 M784.0 313.3 V348.0 M786.6 312.4 V347.1 M789.2 311.5 V346.1 M791.8 310.6 V345.2 M794.4 309.7 V344.3 M797.0 308.8 V343.4 M799.6 307.9 V342.5 M802.2 307.0 V341.6 M804.8 306.1 V340.7 M807.4 305.2 V339.8 M633.0 282.2 V309.2 M635.8 281.5 V308.5 M638.6 280.9 V307.9 M641.4 280.2 V307.2 M644.2 279.5 V306.5 M647.0 278.9 V305.9 M649.8 278.2 V305.2 M652.6 277.6 V304.6 M655.4 276.9 V303.9 M658.2 276.2 V303.2 M661.0 275.6 V302.6 M663.8 274.9 V301.9" stroke="#2a2a2a" stroke-width="0.45"/>
 <!-- ground floor windows -->
 <path d="M657.5 328.6 L684 333.5 V366 L657.5 361 Z" fill="url(#glass)" stroke="#888" stroke-width="0.8"/><path d="M655 361 L686 367 V369 L655 363 Z" fill="#888"/><path d="M670.7 331 V363.5" stroke="#888"/>
 <path d="M718.7 345.4 L750.3 351.5 V408.7 L718.7 401 Z" fill="url(#glass)" stroke="#999" stroke-width="0.8"/><path d="M734.5 348.5 V405" stroke="#999"/><path d="M716 401 L752 409 V411 L716 403 Z" fill="#777"/>
 <path d="M792.7 367 L833.4 378 V416.6 L792.7 405 Z" fill="url(#glass)" stroke="#888" stroke-width="0.8"/><path d="M813 372.5 V411" stroke="#888" stroke-width="1.2"/><path d="M789 405 L836 418 V421 L789 408 Z" fill="#777"/>
 <path d="M934.6 352 L940.6 348 V386 L934.6 390 Z" fill="#7486b0" stroke="#777" stroke-width="0.8"/><path d="M932 390 L944 382 V386 L932 393 Z" fill="#777"/>
 <path d="M967 331 L973.7 327 V362 L967 366 Z" fill="#7486b0" stroke="#777" stroke-width="0.8"/><path d="M965 366 L977 358 V362 L965 369 Z" fill="#777"/>
 <!-- roof -->
 <rect x="780" y="123.7" width="17.3" height="30" fill="#f2f2f2"/>
 <path d="M586.5 218 L824 138.5 L898 262 Z" fill="url(#roofL)"/>
 <path d="M824 138.5 L996 195 V230 L898 262 Z" fill="url(#roofR)"/>
 <path d="M824 138.5 L898 262" stroke="#555" stroke-width="1.4"/>
 <path d="M586.5 219 L898 263 L996 231" stroke="#1e1e1e" stroke-width="4.6" fill="none"/><path d="M590 218.3 L898 261.8 L996 229.8" stroke="#77726e" stroke-width="1.4" stroke-dasharray="2 2.2" fill="none"/>
 <path d="M586.5 218 L824 138.5 L996 195" stroke="#333" stroke-width="1" stroke-dasharray="1.5 1" fill="none"/>
 <!-- car -->
 <path d="M502 341 L527 322.5 L598 309 L606 311 L612 322 L615 332 L615.5 346 L607 356 L545 373 L512 385 L502 383 Z" fill="#fafafa" stroke="#c8c8c8" stroke-width="0.5"/>
 <path d="M502 341 L527 323 L543 331 L518 352 L502 351 Z" fill="#515153"/>
 <path d="M521 352 L545 331 L606 318 L611 328 Z" fill="#3f3f42"/>
 <path d="M567 344 L569 325 M589 337 L591 321" stroke="#fafafa" stroke-width="1.4"/>
 <path d="M548 330 L604 317" stroke="#fafafa" stroke-width="0.8"/>
 <path d="M528 348 L560 341" stroke="#aaa" stroke-width="0.5"/>
 <path d="M537 366 L592 350 M538 370 L590 356" stroke="#333" stroke-width="0.9"/>
 <path d="M502 357 Q508 355 514 357 L514 362 L502 364 Z" fill="#e8e8e8"/>
 <circle cx="523" cy="375.4" r="10.5" fill="#151515"/><circle cx="523" cy="375.4" r="6" fill="#a8a8a8"/>
 <circle cx="600.8" cy="350.8" r="9" fill="#151515"/><circle cx="600.8" cy="350.8" r="5.2" fill="#a8a8a8"/>
 <!-- flower box & bush -->
 <path d="M866 461 L893 470 V480 L866 471 Z" fill="#a0602c"/>
 <g fill="#5a3d8a"><circle cx="872" cy="463" r="3"/><circle cx="879" cy="465" r="3"/><circle cx="886" cy="468" r="3"/></g>
 <path d="M856 503 Q852 488 866 482 Q870 468 884 466 Q893 452 908 458 Q922 456 928 468 Q942 472 944 486 Q954 494 950 503 Z" fill="#8cb83c"/><path d="M940 503 L955 486 L996 470 V503 Z" fill="#6a3a22"/><circle cx="958" cy="490" r="4" fill="#5a3d8a"/><circle cx="966" cy="494" r="3" fill="#d8c040"/><path d="M978 503 Q982 482 986 478 Q990 482 994 503 Z" fill="#2f6a2c"/>
 <path d="M872 492 Q878 474 898 468 Q916 466 926 488 Z" fill="#a6cc56"/><path d="M900 503 Q905 485 920 480 Q935 482 938 503 Z" fill="#9ac44a"/>
 
 <!-- table & chairs -->
 <g stroke-linejoin="round">
  <path d="M721.5 442 L738 448.8 M721.5 442 V461.5 M737 449 V469 M752.7 444 V459.6" stroke="#1e1e1e" stroke-width="1.1"/>
  <path d="M720.5 427.3 L735.2 420.5 L736 437 L721.5 442 Z" fill="#a86c2c" stroke="#222" stroke-width="0.6"/>
  <path d="M721.5 442 L736 437 L752.7 444 L738 448.8 Z" fill="#b5793a"/>
  <path d="M740 432.2 V445 M753.7 439 V452 M767.4 433.2 V446" stroke="#1e1e1e" stroke-width="1.1"/>
  <path d="M739 417.6 L752.7 410.7 L753.7 427.3 L740 432.2 Z" fill="#a86c2c" stroke="#222" stroke-width="0.6"/>
  <path d="M740 432.2 L753.7 427.3 L767.4 433.2 L753.7 439 Z" fill="#b5793a"/>
  <path d="M743 453 V474.2 M766.4 462.5 V485 M801.6 439 V451" stroke="#1a1a1a" stroke-width="1.8"/>
  <path d="M738 448.8 L784 424.4 L807.4 436 L764.5 460.5 Z" fill="#b47a34" stroke="#7a5020" stroke-width="0.5"/>
  <path d="M738 448.8 L764.5 460.5 L807.4 436 V438 L764.5 462.5 L738 450.8 Z" fill="#8a5a22"/>
  <path d="M750 442 L795 430 M757 450 L800 437" stroke="#a06a2a" stroke-width="0.4"/>
  <path d="M768.4 433 Q768 430.3 771.8 430.3 Q775.6 430.3 775.2 433 L774.5 441 H769 Z" fill="#fbfbfb" stroke="#bbb" stroke-width="0.4"/>
  <path d="M770 430.5 l-2.5 -6 M772 430 v-7 M773.5 430.5 l2.5 -6" stroke="#7a9a6a" stroke-width="0.6"/>
  <circle cx="767.5" cy="424.5" r="1.3" fill="#e8e8f0"/><circle cx="772" cy="423" r="1.3" fill="#e8e8f0"/><circle cx="776" cy="424.5" r="1.3" fill="#e8e8f0"/>
  <path d="M775 462.5 V486 M795.7 473 V495.7 M808.4 466 V486" stroke="#1e1e1e" stroke-width="1.1"/>
  <path d="M775.2 462.5 L795.7 456.6 L808.4 466.4 L788 475.2 Z" fill="#b5793a"/>
  <path d="M794.7 473.2 L795.7 452.7 L809.4 448.8 L808.4 467.4 Z" fill="#a86c2c" stroke="#222" stroke-width="0.6"/>
  <path d="M812 464 V482 M825 458.6 V473.2 M797 455 V470" stroke="#1e1e1e" stroke-width="1.1"/>
  <path d="M791.8 451.8 L811.3 446.9 L825 452 L812.3 464.5 Z" fill="#b5793a"/>
  <path d="M811.3 446.9 L827 438 L825 459.6 L812.3 464.5 Z" fill="#a86c2c" stroke="#222" stroke-width="0.6"/>
 </g>
</svg>
<!-- right panel -->
<div class="a" style="left:996px;top:102px;width:28px;height:400px;background:#fff"></div>
<svg class="a" style="left:996px;top:102px" width="28" height="110">
 <path d="M2 2 H28" stroke="#ccc" stroke-width="0.7" stroke-dasharray="1.5 1"/>
 <g fill="none" stroke="#555" stroke-width="0.9">
  <path d="M8 15 L16 10 L24 15 L16 20 Z"/><path d="M8 18 L16 23 L24 18 M8 21 L16 26 L24 21"/>
  <path d="M10 49 V43 Q10 36 16 36 Q22 36 22 43 V49 M10 45 H22 M11 45 V51 M21 45 V51 M13 38 V44 M16 37 V44 M19 38 V44" stroke="#666" stroke-width="1"/>
  <path d="M9 63 V60 H12 M20 60 H23 V63 M23 71 V74 H20 M12 74 H9 V71" stroke="#223" stroke-width="1.2"/><circle cx="16" cy="67" r="3.6" fill="#eee" stroke="#888"/>
 </g>
 <circle cx="16" cy="89" r="4.5" fill="#3a8a4a"/><circle cx="12" cy="92" r="3.5" fill="#3a8a4a"/><circle cx="20" cy="92" r="3.5" fill="#3a8a4a"/><rect x="15" y="93" width="2" height="9" fill="#3a8a4a"/>
 <path d="M0 106 H28" stroke="#ddd" stroke-width="0.8"/>
</svg>
<div class="a" style="left:996px;top:102px;width:1px;height:400px;background:#e8e8e8"></div>

<div id="bot" class="a"></div>
<div id="status" class="a"></div>
<!-- BOTTOM TOOLBAR -->
<div class="a" style="left:0;top:502px;width:804px;height:18px;border:1px solid #dcdcdc;background:#f3f3f3"></div>
<div class="a" style="left:804px;top:502px;width:220px;height:18px;background:#fdfdfd"></div>
<div class="bi" style="left:5px;top:502px">Layer :</div>
<div class="bi" style="left:30px;top:502px;color:#d03030">Konstruktio</div>
<div class="a" style="left:64px;top:505px;width:9px;height:12px;background:#fff;border:1px solid #e0e0e0"></div>
<div class="tsep" style="left:76px;top:505px"></div>
<div class="bi" style="left:80px;top:502px">Geschoss :</div>
<div class="bi" style="left:117px;top:502px">Obergeschc</div>
<div class="a" style="left:152px;top:505px;width:9px;height:12px;background:#fff;border:1px solid #e0e0e0"></div>
<div class="tsep" style="left:166px;top:505px;background:#ccc"></div><div class="tsep" style="left:168px;top:505px;background:#ccc"></div>
<div class="bi" style="left:172px;top:502px">l =</div>
<div class="a" style="left:184px;top:504px;width:24px;height:14px;background:#fff;border:1px solid #999;font-size:6.6px;line-height:13px;padding-left:2px">61,863</div>
<div class="a" style="left:208px;top:504px;width:10px;height:14px;background:#e2e2e2;border:1px solid #bbb"></div>
<div class="bi" style="left:221px;top:502px">cm</div>
<div class="tsep" style="left:234px;top:505px"></div>
<div class="bi" style="left:238px;top:502px">phi =</div>
<div class="a" style="left:258px;top:504px;width:23px;height:14px;background:#fff;border:1px solid #999;font-size:6.6px;line-height:13px;padding-left:3px">-45,0</div>
<div class="a" style="left:281px;top:504px;width:10px;height:14px;background:#e2e2e2;border:1px solid #bbb"></div>
<div class="bi" style="left:296px;top:500px">°</div>
<div class="tsep" style="left:301px;top:505px"></div>
<div class="bi" style="left:305px;top:502px">dl (Richtung/Di</div>
<div class="a" style="left:354px;top:505px;width:9px;height:12px;background:#fff;border:1px solid #e0e0e0"></div>
<div class="tsep" style="left:366px;top:505px"></div>
<div class="a" style="left:368px;top:503px;width:115px;height:16px;background:#cfe5fb;border:1px solid #b3d6f6"></div>
<div class="a" style="left:500px;top:503px;width:16px;height:16px;background:#cfe5fb;border:1px solid #b3d6f6"></div>
<div class="a" style="left:533px;top:503px;width:16px;height:16px;background:#cfe5fb;border:1px solid #b3d6f6"></div>
<div class="a" style="left:565px;top:503px;width:32px;height:16px;background:#cfe5fb;border:1px solid #b3d6f6"></div>
<div class="a" style="left:640px;top:503px;width:16px;height:16px;background:#cfe5fb;border:1px solid #b3d6f6"></div>
<div class="tsep" style="left:618px;top:504px;height:14px"></div>
<div class="a" style="left:384px;top:503px;width:1px;height:16px;background:#a9cdf2"></div><div class="a" style="left:400px;top:503px;width:1px;height:16px;background:#a9cdf2"></div><div class="a" style="left:416px;top:503px;width:1px;height:16px;background:#a9cdf2"></div><div class="a" style="left:432px;top:503px;width:1px;height:16px;background:#a9cdf2"></div><div class="a" style="left:448px;top:503px;width:1px;height:16px;background:#a9cdf2"></div><div class="a" style="left:464px;top:503px;width:1px;height:16px;background:#a9cdf2"></div><div class="a" style="left:581px;top:503px;width:1px;height:16px;background:#a9cdf2"></div>
<svg class="a" style="left:207px;top:504px" width="90" height="14"><path d="M3 5.5 L5.5 3 L8 5.5 Z M3 8.5 L5.5 11 L8 8.5 Z M77 5.5 L79.5 3 L82 5.5 Z M77 8.5 L79.5 11 L82 8.5 Z" fill="#222"/></svg>
<svg class="a" style="left:60px;top:503px" width="310" height="16"><path d="M6 7 l2 2 l2 -2 M94 7 l2 2 l2 -2 M296 7 l2 2 l2 -2" stroke="#666" stroke-width="0.6" fill="none"/></svg>
<svg class="a" style="left:360px;top:502px" width="440" height="18">
 <g fill="none" stroke="#333" stroke-width="0.8">
  <path d="M12 4 H19 L22 8 V14 H12 Z" fill="#999"/>
  <path d="M28 5 H34 L37 8 V14 H28 Z" stroke="#555"/><rect x="28" y="10" width="9" height="4" fill="#e06020" stroke="none"/>
  <path d="M44 5 H54 M44 8 H54 M44 11 H54" stroke="#111" stroke-width="1.6"/>
  <path d="M60 6 H70 M60 9 H70 M60 12 H70" stroke="#444" stroke-dasharray="2 1"/>
  <path d="M76 10 H86 M80 6 H88" stroke="#444" stroke-width="0.7"/>
  <text x="93" y="12" font-size="6" font-weight="bold" fill="#333" stroke="none" font-family="Liberation Sans">Abc</text>
  <path d="M108 11 H120 M108 8 V14 M120 8 V14" stroke="#333"/>
  <rect x="126" y="4" width="11" height="10" stroke="#222" stroke-width="1"/><path d="M129 4 V14 M134 4 V14" stroke="#222" stroke-dasharray="1 1"/>
  <rect x="144" y="4" width="10" height="10" stroke="#333"/>
  <rect x="159" y="5" width="8" height="8" fill="#4a6fa0" stroke="#555"/><rect x="162" y="8" width="6" height="6" fill="#e0a030" stroke="none"/>
  <path d="M176 12 L181 6 L187 11" stroke="#333"/>
  <path d="M192 8 h10 M192 11 h10" stroke="#555" stroke-dasharray="1.5 1"/>
  <path d="M208 10 L213 5 L220 9 L215 14 Z" fill="#777"/>
  <circle cx="229" cy="9" r="5" stroke="#222"/><text x="226.5" y="11.5" font-size="6" font-weight="bold" fill="#222" stroke="none" font-family="Liberation Sans">N</text>
  <path d="M249 5 V13 M247.5 5 h3 M247.5 13 h3" stroke="#222" stroke-width="1.1"/>
  <rect x="267" y="7" width="10" height="5" stroke="#555"/>
  <rect x="284" y="4" width="9" height="10" stroke="#333"/>
  <rect x="300" y="4" width="10" height="10" stroke="#333"/><path d="M305 4 V14 M300 9 H310" stroke="#333"/>
  <rect x="317" y="4" width="10" height="10" stroke="#555" stroke-dasharray="1.5 1"/>
  <rect x="334" y="4" width="10" height="10" stroke="#555"/><circle cx="339" cy="9" r="1.8" fill="#e05020" stroke="none"/>
  <path d="M352 5 V12 H360" stroke="#333"/>
  <rect x="368" y="4" width="10" height="10" stroke="#555"/><circle cx="373" cy="9" r="1.8" fill="#e05020" stroke="none"/>
  <rect x="384" y="4" width="10" height="10" stroke="#555" stroke-dasharray="1 1"/><circle cx="389" cy="9" r="2" fill="#e08040" stroke="none"/>
  <path d="M402 4 V14 M404 4 V14 M406 4 V14 M408 4 V14 M410 4 V14" stroke="#333"/>
  <path d="M418 5 h3 M424 12 h3 M426 6 v4" stroke="#333"/>
  <rect x="432" y="5" width="7" height="7" stroke="#444"/><path d="M428 14 L435 8" stroke="#444"/>
 </g>
</svg>
<!-- STATUS -->
<div class="st" style="left:2px;top:520px">Gruppe gr10&nbsp; Wohnen00 &lt;Unbekannt&gt; L=2D-Symbole G=Obergeschoss</div>
<div class="st" style="left:649px;top:520px">Selektion</div>
<div class="ss" style="left:749px;top:520px"></div><div class="st" style="left:752px;top:520px">1:1 sel</div>
<div class="ss" style="left:779px;top:520px"></div><div class="st" style="left:781px;top:520px">X:</div>
<div class="ss" style="left:816px;top:520px"></div><div class="st" style="left:818px;top:520px">Y:</div>
<div class="ss" style="left:852px;top:520px"></div><div class="st" style="left:855px;top:520px">Z:</div>
<div class="ss" style="left:891px;top:520px"></div><div class="st" style="left:893px;top:520px">1:100</div>
<div class="ss" style="left:920px;top:520px"></div><div class="st" style="left:923px;top:520px">Zentimeter</div>
<div class="ss" style="left:970px;top:520px"></div><div class="st" style="left:973px;top:520px">Ein</div>
<div class="ss" style="left:988px;top:520px"></div><div class="st" style="left:990px;top:520px;color:#aaa">UF</div>
<div class="ss" style="left:998px;top:520px"></div><div class="st" style="left:999px;top:520px">NUM</div>
<div class="ss" style="left:1016px;top:520px"></div><div class="st" style="left:1017px;top:520px;color:#aaa">RF</div>

</body></html>
